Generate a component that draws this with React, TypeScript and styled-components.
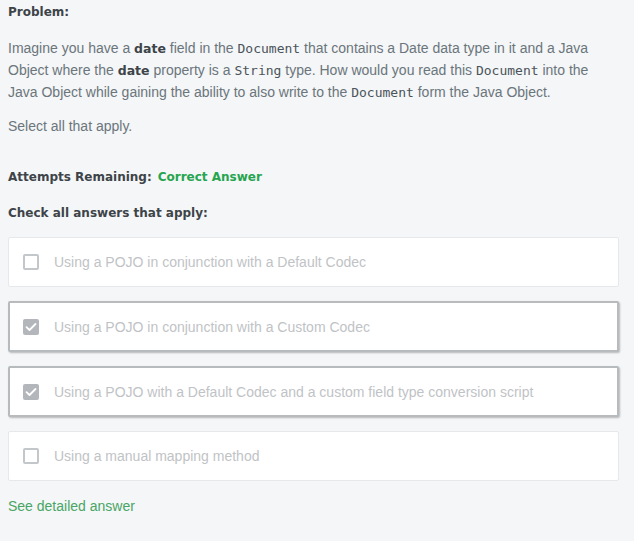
import React from "react";
import styled, { createGlobalStyle } from "styled-components";

const Global = createGlobalStyle`
  html, body { margin: 0; padding: 0; background: #f5f6f7; }
  body { font-family: "Liberation Sans", Arial, sans-serif; }
`;

const Page = styled.div`
  width: 634px;
  min-height: 541px;
  box-sizing: border-box;
  padding: 3px 15px 0 8px;
  background: #f5f6f7;
  color: #6a757c;
`;

const Heading = styled.div<{ $mt?: number }>`
  font-family: "DejaVu Sans", sans-serif;
  font-weight: 700;
  font-size: 12px;
  color: #3d4449;
  line-height: 18px;
  margin-top: ${(p) => p.$mt ?? 0}px;
  display: flex;
  gap: 6px;
`;

const Paragraph = styled.p<{ $mt: number }>`
  margin: ${(p) => p.$mt}px 0 0;
  font-size: 14px;
  line-height: 22px;
  color: #6a757c;
`;

const Bold = styled.b`
  font-family: "DejaVu Sans", sans-serif;
  font-weight: 700;
  font-size: 12.5px;
  line-height: 1;
  color: #3d4449;
`;

const Code = styled.code`
  font-family: "DejaVu Sans Mono", monospace;
  font-size: 13px;
  line-height: 1;
  color: #4a535a;
`;

const Success = styled.span`
  color: #26a550;
`;

const List = styled.div`
  margin-top: 15px;
  display: flex;
  flex-direction: column;
  gap: 14px;
`;

const Card = styled.div<{ $selected: boolean }>`
  box-sizing: border-box;
  height: ${(p) => (p.$selected ? 51 : 50)}px;
  background: #fff;
  border: ${(p) => (p.$selected ? "2px solid #b7bbbe" : "1px solid #e6e9eb")};
  box-shadow: ${(p) => (p.$selected ? "1px 1px 2px rgba(0,0,0,0.25)" : "none")};
  border-radius: 2px;
  display: flex;
  align-items: center;
  gap: 15px;
  padding-left: ${(p) => (p.$selected ? 13 : 14)}px;
`;

const Box = styled.span<{ $checked: boolean }>`
  box-sizing: border-box;
  width: 16px;
  height: 16px;
  border-radius: 2px;
  border: ${(p) => (p.$checked ? "none" : "2px solid #c3c7ca")};
  background: ${(p) => (p.$checked ? "#b3b7bb" : "#fff")};
  display: flex;
  align-items: center;
  justify-content: center;
  flex-shrink: 0;
`;

const Label = styled.span`
  font-size: 14px;
  color: #bfc3c6;
`;

const Link = styled.div`
  margin-top: 14px;
  font-size: 14px;
  line-height: 22px;
  color: #48a566;
`;

const options = [
  { text: "Using a POJO in conjunction with a Default Codec", checked: false },
  { text: "Using a POJO in conjunction with a Custom Codec", checked: true },
  {
    text: "Using a POJO with a Default Codec and a custom field type conversion script",
    checked: true,
  },
  { text: "Using a manual mapping method", checked: false },
];

export default function App() {
  return (
    <>
      <Global />
      <Page>
        <Heading>Problem:</Heading>
        <Paragraph $mt={16}>
          Imagine you have a <Bold>date</Bold> field in the <Code>Document</Code> that
          contains a Date data type in it and a Java Object where the <Bold>date</Bold>{" "}
          property is a <Code>String</Code> type. How would you read this{" "}
          <Code>Document</Code> into the Java Object while gaining the ability to also
          write to the <Code>Document</Code> form the Java Object.
        </Paragraph>
        <Paragraph $mt={12}>Select all that apply.</Paragraph>
        <Heading $mt={31}>
          Attempts Remaining: <Success>Correct Answer</Success>
        </Heading>
        <Heading $mt={18}>Check all answers that apply:</Heading>
        <List>
          {options.map((o) => (
            <Card key={o.text} $selected={o.checked}>
              <Box $checked={o.checked}>
                {o.checked && (
                  <svg width="12" height="10" viewBox="0 0 12 10">
                    <path
                      d="M1.5 5.2 L4.5 8 L10.5 2"
                      fill="none"
                      stroke="#fff"
                      strokeWidth="1.8"
                      strokeLinecap="round"
                      strokeLinejoin="round"
                    />
                  </svg>
                )}
              </Box>
              <Label>{o.text}</Label>
            </Card>
          ))}
        </List>
        <Link>See detailed answer</Link>
      </Page>
    </>
  );
}
